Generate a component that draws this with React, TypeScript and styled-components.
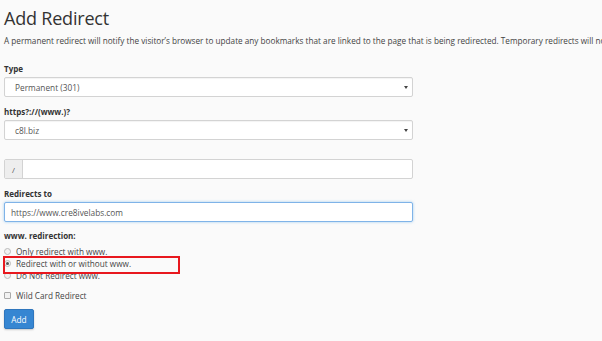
import React from "react";
import styled, { createGlobalStyle } from "styled-components";

const Global = createGlobalStyle`
  html, body { margin: 0; padding: 0; background: #fafafa; }
  body { font-family: "Open Sans", "DejaVu Sans", sans-serif; color: #333; overflow: hidden; }
  * { box-sizing: border-box; }
`;

const Page = styled.div`
  width: 602px;
  height: 341px;
  padding: 4px 0 0 4px;
  overflow: hidden;
`;

const Title = styled.h1`
  margin: 0;
  font-size: 18px;
  font-weight: 400;
  line-height: 28px;
  color: #333;
  letter-spacing: -0.2px;
`;

const Lead = styled.p`
  margin: 3px 0 0;
  font-size: 8.2px;
  line-height: 12px;
  white-space: nowrap;
  color: #444;
`;

const Group = styled.div<{ $top?: number }>`
  margin-top: ${(p) => p.$top ?? 8}px;
  width: 409px;
`;

const Label = styled.div<{ $gap?: number }>`
  font-size: 8px;
  font-weight: 700;
  line-height: 12px;
  margin-bottom: ${(p) => p.$gap ?? 2}px;
  color: #333;
`;

const Box = styled.div<{ $focus?: boolean; $pad?: number }>`
  height: 20px;
  display: flex;
  align-items: center;
  background: #fff;
  border: 1px solid ${(p) => (p.$focus ? "#7fb3e8" : "#d3d3d3")};
  border-radius: 2px;
  box-shadow: ${(p) =>
    p.$focus ? "0 0 3px rgba(102,175,233,0.6)" : "inset 0 1px 1px rgba(0,0,0,0.05)"};
  font-size: 8.3px;
  color: #555;
  padding: 0 0 0 ${(p) => p.$pad ?? 10}px;
  position: relative;
`;

const Arrow = styled.span`
  position: absolute;
  right: 4px;
  top: 8px;
  width: 0;
  height: 0;
  border-left: 2.5px solid transparent;
  border-right: 2.5px solid transparent;
  border-top: 3px solid #444;
`;

const InputGroup = styled.div`
  display: flex;
  height: 20px;
  border: 1px solid #d3d3d3;
  border-radius: 2px;
  background: #fff;
  overflow: hidden;
`;

const Addon = styled.div`
  width: 18px;
  background: #eee;
  border-right: 1px solid #d3d3d3;
  display: flex;
  align-items: center;
  justify-content: center;
  font-size: 8px;
  color: #555;
`;

const Options = styled.div`
  position: relative;
  display: flex;
  flex-direction: column;
`;

const Option = styled.label`
  display: flex;
  align-items: center;
  height: 12px;
  font-size: 8.2px;
  color: #444;
  gap: 5px;
`;

const Radio = styled.span<{ $on?: boolean }>`
  width: 7px;
  height: 7px;
  border-radius: 50%;
  border: 1px solid #bbb;
  background: #f2f2f2;
  display: inline-flex;
  align-items: center;
  justify-content: center;
  &::after {
    content: "";
    width: 3px;
    height: 3px;
    border-radius: 50%;
    background: ${(p) => (p.$on ? "#555" : "transparent")};
  }
`;

const Highlight = styled.div`
  position: absolute;
  left: -1px;
  top: 11px;
  width: 177px;
  height: 18px;
  border: 2px solid #e8181e;
`;

const Check = styled.span`
  width: 7px;
  height: 7px;
  border: 1px solid #aaa;
  border-radius: 1px;
  background: #f2f2f2;
`;

const Button = styled.button`
  display: block;
  margin-top: 8px;
  width: 30px;
  height: 20px;
  border: 1px solid #2f76bd;
  border-radius: 2px;
  background: #3686d2;
  color: #fff;
  font-family: inherit;
  font-size: 8.3px;
  padding: 0;
  box-shadow: 0 1px 2px rgba(0,0,0,0.2);
`;

export default function App() {
  return (
    <>
      <Global />
      <Page>
        <Title>Add Redirect</Title>
        <Lead>
          A permanent redirect will notify the visitor’s browser to update any bookmarks that are linked to the page that is being redirected. Temporary redirects will not update the visitor's bookmarks.
        </Lead>
        <Group $top={16}>
          <Label>Type</Label>
          <Box>
            Permanent (301)
            <Arrow />
          </Box>
        </Group>
        <Group $top={9}>
          <Label>https?://(www.)?</Label>
          <Box>
            c8l.biz
            <Arrow />
          </Box>
        </Group>
        <Group $top={19}>
          <InputGroup>
            <Addon>/</Addon>
          </InputGroup>
        </Group>
        <Group $top={9}>
          <Label>Redirects to</Label>
          <Box $focus $pad={6}>https://www.cre8ivelabs.com</Box>
        </Group>
        <Group $top={8}>
          <Label $gap={3}>www. redirection:</Label>
          <Options>
            <Option><Radio />Only redirect with www.</Option>
            <Option><Radio $on />Redirect with or without www.</Option>
            <Option><Radio />Do Not Redirect www.</Option>
            <Highlight />
          </Options>
        </Group>
        <Group $top={8}>
          <Option><Check />Wild Card Redirect</Option>
          <Button>Add</Button>
        </Group>
      </Page>
    </>
  );
}
